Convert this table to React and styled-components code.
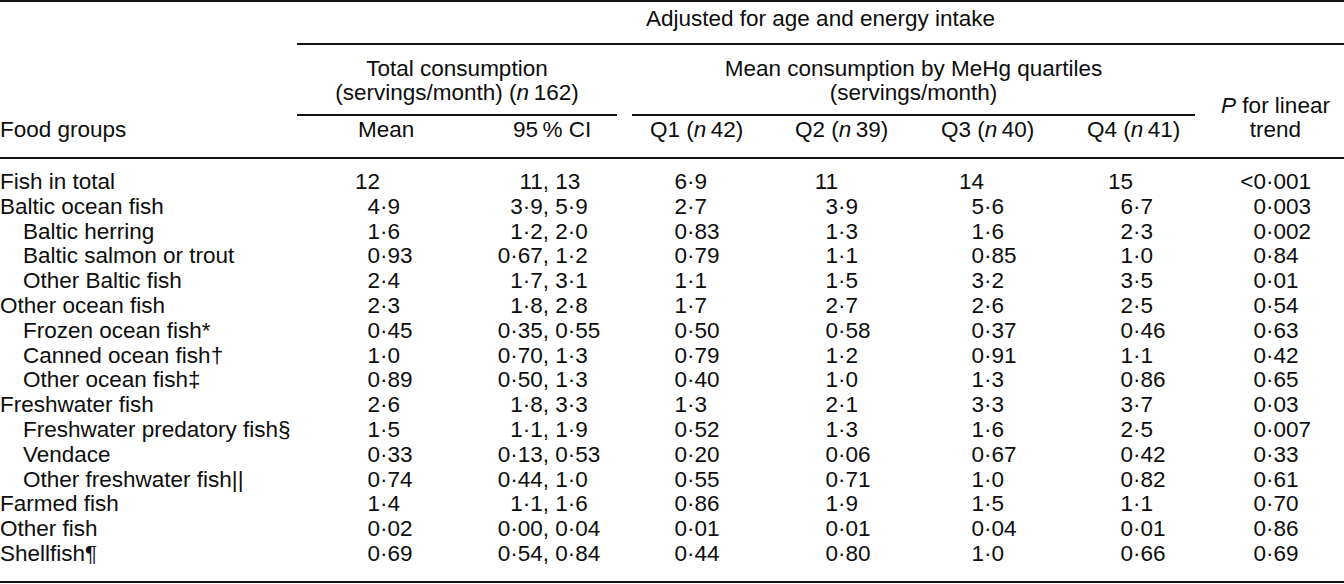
import React from "react";
import styled, { createGlobalStyle } from "styled-components";

// Fixed grid used by header and body rows alike
const COLS = "297px 163px 163px 146px 146px 146px 146px 1fr";

const rows = [
  ["Fish in total", 0, "12", "11, 13", "6·9", "11", "14", "15", "<0·001"],
  ["Baltic ocean fish", 0, "4·9", "3·9, 5·9", "2·7", "3·9", "5·6", "6·7", "0·003"],
  ["Baltic herring", 1, "1·6", "1·2, 2·0", "0·83", "1·3", "1·6", "2·3", "0·002"],
  ["Baltic salmon or trout", 1, "0·93", "0·67, 1·2", "0·79", "1·1", "0·85", "1·0", "0·84"],
  ["Other Baltic fish", 1, "2·4", "1·7, 3·1", "1·1", "1·5", "3·2", "3·5", "0·01"],
  ["Other ocean fish", 0, "2·3", "1·8, 2·8", "1·7", "2·7", "2·6", "2·5", "0·54"],
  ["Frozen ocean fish*", 1, "0·45", "0·35, 0·55", "0·50", "0·58", "0·37", "0·46", "0·63"],
  ["Canned ocean fish†", 1, "1·0", "0·70, 1·3", "0·79", "1·2", "0·91", "1·1", "0·42"],
  ["Other ocean fish‡", 1, "0·89", "0·50, 1·3", "0·40", "1·0", "1·3", "0·86", "0·65"],
  ["Freshwater fish", 0, "2·6", "1·8, 3·3", "1·3", "2·1", "3·3", "3·7", "0·03"],
  ["Freshwater predatory fish§", 1, "1·5", "1·1, 1·9", "0·52", "1·3", "1·6", "2·5", "0·007"],
  ["Vendace", 1, "0·33", "0·13, 0·53", "0·20", "0·06", "0·67", "0·42", "0·33"],
  ["Other freshwater fish||", 1, "0·74", "0·44, 1·0", "0·55", "0·71", "1·0", "0·82", "0·61"],
  ["Farmed fish", 0, "1·4", "1·1, 1·6", "0·86", "1·9", "1·5", "1·1", "0·70"],
  ["Other fish", 0, "0·02", "0·00, 0·04", "0·01", "0·01", "0·04", "0·01", "0·86"],
  ["Shellfish¶", 0, "0·69", "0·54, 0·84", "0·44", "0·80", "1·0", "0·66", "0·69"],
];

// width of the integer part (cell start -> decimal point) per numeric column
const INT_W = { mean: 83, q1: 64, q2: 69, q3: 69, q4: 72, p: 59 };
const CI_LEFT_W = 89;

const quartiles = [
  ["Q1", "42"],
  ["Q2", "39"],
  ["Q3", "40"],
  ["Q4", "41"],
];

const App = () => {
  return (
    <>
      <GlobalStyle />
      <Table>
        <Header>
          <HeadCell $col="1" $row="1 / 4" $end>
            Food groups
          </HeadCell>
          <Spanner $col="2 / 9" $row="1" $top>
            Adjusted for age and energy intake
          </Spanner>
          <Spanner $col="2 / 4" $row="2" $mr={6}>
            Total consumption
            <br />
            (servings/month) (<I>n</I>{"\u2009"}162)
          </Spanner>
          <Spanner $col="4 / 8" $row="2" $ml={9} $mr={12}>
            Mean consumption by MeHg quartiles
            <br />
            (servings/month)
          </Spanner>
          <HeadCell $col="8" $row="2 / 4" $end $center>
            <I>P</I> for linear
            <br />
            trend
          </HeadCell>
          <ColLabel $col="2" $pad={61}>Mean</ColLabel>
          <ColLabel $col="3" $pad={53}>95{"\u2009"}% CI</ColLabel>
          {quartiles.map(([q, n], i) => (
            <ColLabel key={q} $col={String(4 + i)} $pad={i === 0 ? 27 : 26}>
              {q} (<I>n</I>{"\u2009"}{n})
            </ColLabel>
          ))}
        </Header>

        <Body>
          {rows.map(([label, indent, mean, ci, q1, q2, q3, q4, p]) => (
            <Row key={label}>
              <Label $indent={indent}>{label}</Label>
              <Num value={mean} w={INT_W.mean} />
              <CI value={ci} />
              <Num value={q1} w={INT_W.q1} />
              <Num value={q2} w={INT_W.q2} />
              <Num value={q3} w={INT_W.q3} />
              <Num value={q4} w={INT_W.q4} />
              <Num value={p} w={INT_W.p} />
            </Row>
          ))}
        </Body>
      </Table>
    </>
  );
};

// decimal aligned number
const Num = ({ value, w }) => {
  const [int, frac] = value.split("·");
  return (
    <NumCell>
      <IntPart $w={w}>{int}</IntPart>
      <span>{frac !== undefined ? "·" + frac : ""}</span>
    </NumCell>
  );
};

// confidence interval aligned on the comma
const CI = ({ value }) => {
  const [a, b] = value.split(", ");
  return (
    <NumCell>
      <IntPart $w={CI_LEFT_W}>{a},</IntPart>
      <Rest>{" " + b}</Rest>
    </NumCell>
  );
};

export default App;

// #######################################
// CSS
// #######################################

const GlobalStyle = createGlobalStyle`
  html, body {
    margin: 0;
    padding: 0;
    background: #ffffff;
  }
  body {
    font-family: "Liberation Sans", Arial, Helvetica, sans-serif;
    font-size: 22.5px;
    color: #0d0d0d;
  }
`;

const Table = styled.div`
  width: 1344px;
  border-top: 2px solid #111;
  border-bottom: 2px solid #111;
`;

const Header = styled.div`
  display: grid;
  grid-template-columns: ${COLS};
  line-height: 24px;
  border-bottom: 2px solid #111;
`;

const HeadCell = styled.div`
  grid-column: ${(p) => p.$col};
  grid-row: ${(p) => p.$row};
  align-self: ${(p) => (p.$end ? "end" : "start")};
  text-align: ${(p) => (p.$center ? "center" : "left")};
  padding-bottom: 15px;
  white-space: nowrap;
`;

const Spanner = styled.div`
  grid-column: ${(p) => p.$col};
  grid-row: ${(p) => p.$row};
  margin-left: ${(p) => p.$ml || 0}px;
  margin-right: ${(p) => p.$mr || 0}px;
  padding: ${(p) => (p.$top ? "5px 0 12px" : "12px 0 9px")};
  text-align: center;
  white-space: nowrap;
  border-bottom: 2px solid #111;
`;

const ColLabel = styled.div`
  grid-column: ${(p) => p.$col};
  grid-row: 3;
  padding: 2px 0 15px ${(p) => p.$pad}px;
  white-space: nowrap;
`;

const I = styled.i`
  font-style: italic;
`;

const Body = styled.div`
  padding: 11px 0 14px;
`;

const Row = styled.div`
  display: grid;
  grid-template-columns: ${COLS};
  line-height: 24.8px;
  white-space: nowrap;
`;

const Label = styled.div`
  padding-left: ${(p) => (p.$indent ? 23 : 0)}px;
`;

const NumCell = styled.div`
  display: flex;
`;

const IntPart = styled.span`
  display: inline-block;
  width: ${(p) => p.$w}px;
  text-align: right;
  flex: none;
`;

const Rest = styled.span`
  white-space: pre;
`;
